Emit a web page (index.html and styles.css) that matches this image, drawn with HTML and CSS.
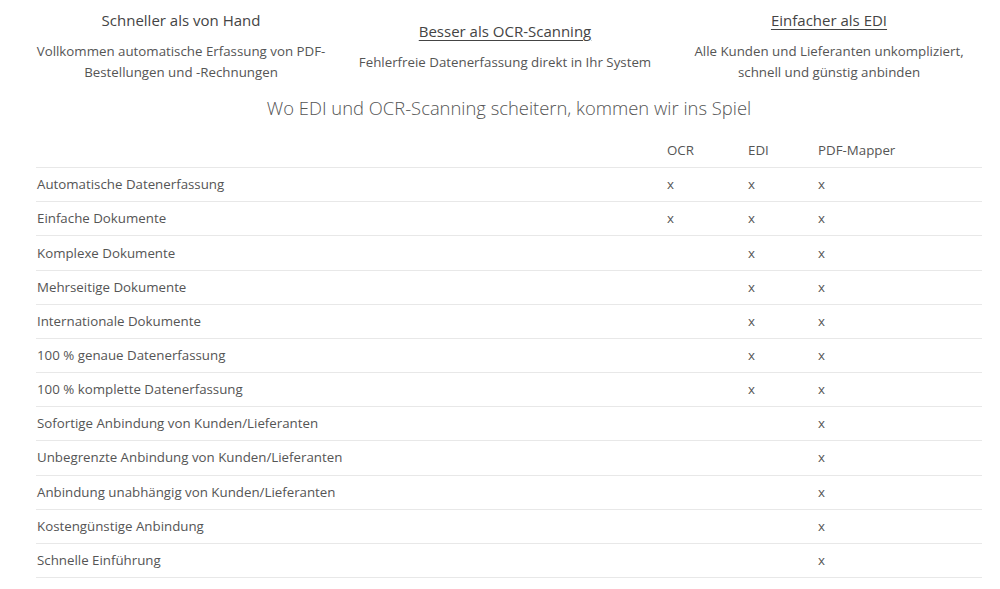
FILE: index.html
```html
<!DOCTYPE html>
<html lang="de">
<head>
<meta charset="utf-8">
<title>PDF-Mapper Vergleich</title>
<link rel="stylesheet" href="styles.css">
</head>
<body>
<div class="page">
  <section class="features">
    <div class="feature">
      <h3 class="feature-title">Schneller als von Hand</h3>
      <p class="feature-text">Vollkommen automatische Erfassung von PDF-<br>Bestellungen und -Rechnungen</p>
    </div>
    <div class="feature">
      <h3 class="feature-title"><a href="#">Besser als OCR-Scanning</a></h3>
      <p class="feature-text">Fehlerfreie Datenerfassung direkt in Ihr System</p>
    </div>
    <div class="feature">
      <h3 class="feature-title"><a href="#">Einfacher als EDI</a></h3>
      <p class="feature-text">Alle Kunden und Lieferanten unkompliziert,<br>schnell und günstig anbinden</p>
    </div>
  </section>

  <section class="compare">
    <h2 class="compare-title">Wo EDI und OCR-Scanning scheitern, kommen wir ins Spiel</h2>
    <table class="compare-table">
      <colgroup>
        <col class="c-label">
        <col class="c-ocr">
        <col class="c-edi">
        <col class="c-pdf">
      </colgroup>
      <thead>
        <tr><th></th><th>OCR</th><th>EDI</th><th>PDF-Mapper</th></tr>
      </thead>
      <tbody>
        <tr><td>Automatische Datenerfassung</td><td>x</td><td>x</td><td>x</td></tr>
        <tr><td>Einfache Dokumente</td><td>x</td><td>x</td><td>x</td></tr>
        <tr><td>Komplexe Dokumente</td><td></td><td>x</td><td>x</td></tr>
        <tr><td>Mehrseitige Dokumente</td><td></td><td>x</td><td>x</td></tr>
        <tr><td>Internationale Dokumente</td><td></td><td>x</td><td>x</td></tr>
        <tr><td>100 % genaue Datenerfassung</td><td></td><td>x</td><td>x</td></tr>
        <tr><td>100 % komplette Datenerfassung</td><td></td><td>x</td><td>x</td></tr>
        <tr><td>Sofortige Anbindung von Kunden/Lieferanten</td><td></td><td></td><td>x</td></tr>
        <tr><td>Unbegrenzte Anbindung von Kunden/Lieferanten</td><td></td><td></td><td>x</td></tr>
        <tr><td>Anbindung unabhängig von Kunden/Lieferanten</td><td></td><td></td><td>x</td></tr>
        <tr><td>Kostengünstige Anbindung</td><td></td><td></td><td>x</td></tr>
        <tr><td>Schnelle Einführung</td><td></td><td></td><td>x</td></tr>
      </tbody>
    </table>
  </section>
</div>
</body>
</html>
```

FILE: styles.css
```css
html, body {
  margin: 0;
  padding: 0;
  background: #fff;
}

body {
  font-family: "Open Sans", "Liberation Sans", sans-serif;
  color: #555;
  font-size: 13.3px;
  line-height: 21px;
}

.page {
  padding-top: 8px;
}

.features {
  display: grid;
  grid-template-columns: repeat(3, 324px);
  margin-left: 19px;
  align-items: center;
  text-align: center;
}

.feature-title {
  margin: 0 0 9px;
  font-size: 15px;
  font-weight: 400;
  line-height: 24px;
  color: #444;
}

.feature-title a {
  color: #444;
  text-decoration: underline;
  text-underline-offset: 3px;
}

.feature-text {
  margin: 0;
  font-size: 13.3px;
  line-height: 21px;
  color: #555;
}

.compare {
  margin: 11px 18px 0 36px;
}

.compare-title {
  margin: 0 0 12px;
  font-size: 18.4px;
  font-weight: 300;
  line-height: 28px;
  text-align: center;
  color: #555;
}

.compare-table {
  width: 100%;
  border-collapse: collapse;
  table-layout: fixed;
}

.c-ocr { width: 81px; }
.c-edi { width: 70px; }
.c-pdf { width: 165px; }

.compare-table th,
.compare-table td {
  padding: 6.08px 0 6.08px 1px;
  text-align: left;
  font-weight: 400;
  line-height: 21px;
  color: #555;
  border-bottom: 1px solid #e8e8e8;
}
```
